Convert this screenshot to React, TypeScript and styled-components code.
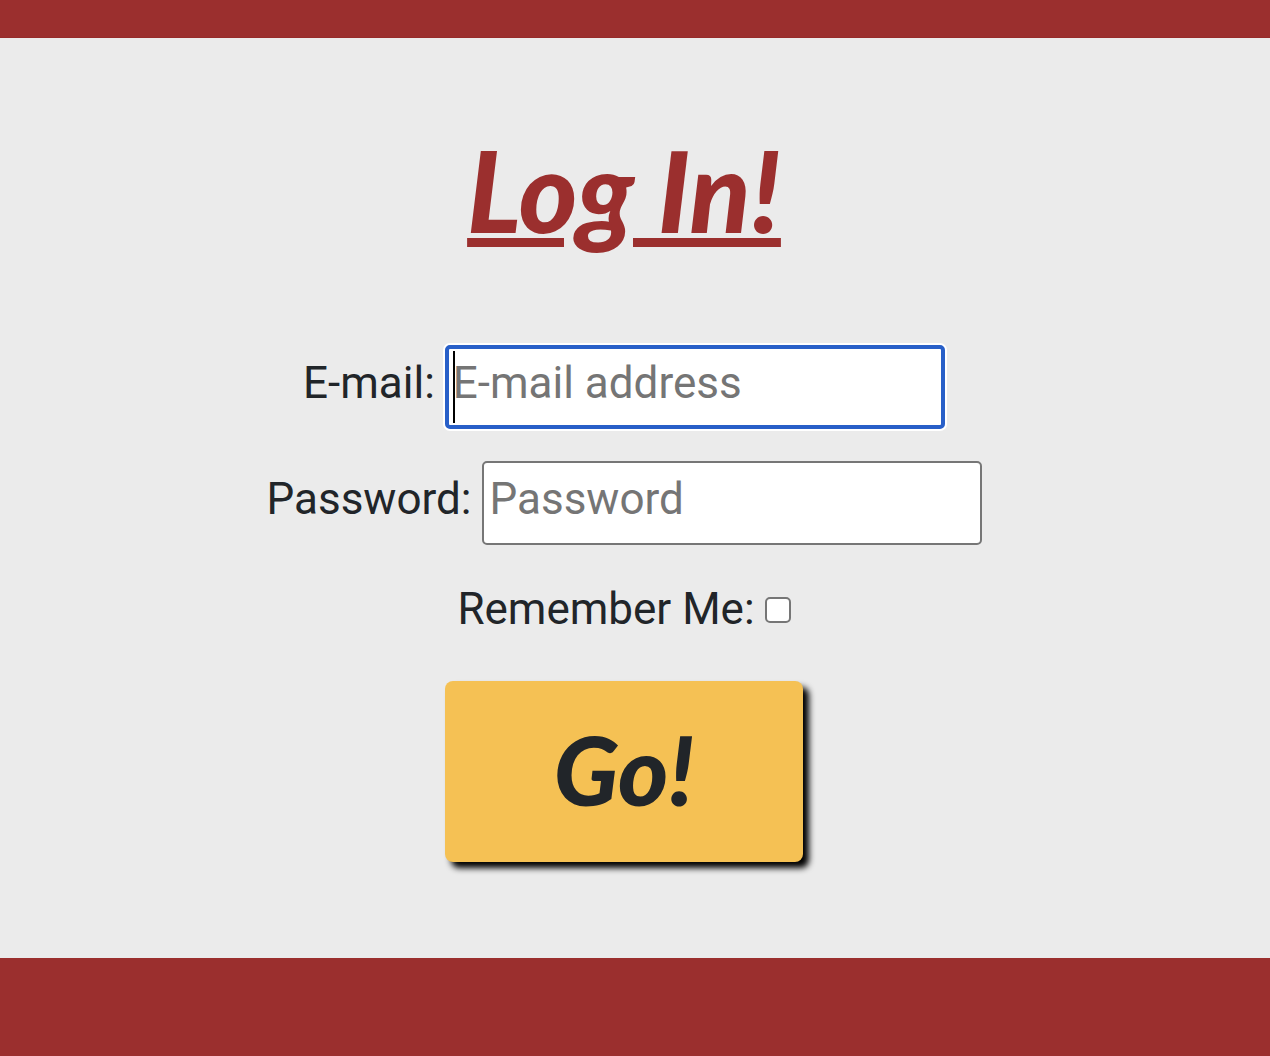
import React from "react";
import styled, { createGlobalStyle } from "styled-components";

const GlobalStyle = createGlobalStyle`
  *, *::before, *::after { box-sizing: border-box; }
  body {
    margin: 0;
    background: #9b2f2e;
    color: #212529;
    font-family: Roboto, "Liberation Sans", sans-serif;
    font-size: 44px;
    line-height: 64px;
  }
`;

const TopBar = styled.header`
  height: 38px;
  background: #9b2f2e;
  border-bottom: 1px solid #962b2a;
`;

const Main = styled.main`
  display: flex;
  flex-direction: column;
  align-items: center;
  padding: 80px 22px 96px 0;
  background: #ebebeb;
`;

const Title = styled.h1`
  margin: 0 0 83px;
  color: #9b2f2e;
  font-family: Lato, sans-serif;
  font-size: 112px;
  font-style: italic;
  font-weight: 900;
  line-height: 144px;
  text-decoration: underline;
  text-decoration-thickness: 9px;
  text-underline-offset: 5px;
`;

const LoginForm = styled.form`
  display: flex;
  flex-direction: column;
  align-items: center;
  gap: 32px;
`;

const Row = styled.div`
  display: flex;
  align-items: center;
  gap: 10px;
`;

const Label = styled.label`
  padding-bottom: 8px;
`;

const Field = styled.input`
  width: 500px;
  height: 84px;
  padding: 0 6px 8px;
  border: 2px solid #767676;
  border-radius: 5px;
  outline: none;
  background: #fff;
  color: #212529;
  caret-color: #000;
  font: inherit;

  &::placeholder {
    color: #757575;
    opacity: 1;
  }

  &:focus {
    padding: 0 4px 8px;
    border: 4px solid #285fc8;
    box-shadow: 0 0 0 2px #fff;
  }

  /* A thick, full-height caret while the focused field is empty. */
  &:focus:placeholder-shown {
    caret-color: transparent;
    background: linear-gradient(#000, #000) 4px 2px / 2px 72px no-repeat #fff;
  }
`;

const CheckBox = styled.input`
  appearance: none;
  width: 26px;
  height: 26px;
  margin: 0 0 6px;
  border: 2px solid #767676;
  border-radius: 5px;
  background: #fff;

  &:checked {
    background: #285fc8;
  }
`;

const GoButton = styled.button`
  width: 358px;
  height: 181px;
  padding: 0 0 6px;
  border: 0;
  border-radius: 8px;
  background: #f5c154;
  box-shadow: 6px 6px 6px #000;
  color: #212529;
  cursor: pointer;
  font-family: Lato, sans-serif;
  font-size: 96px;
  font-style: italic;
  font-weight: 900;
  line-height: 120px;
`;

export default function App() {
  return (
    <>
      <GlobalStyle />
      <TopBar />
      <Main>
        <Title>Log In!</Title>
        <LoginForm onSubmit={(event: React.FormEvent) => event.preventDefault()}>
          <Row>
            <Label htmlFor="email">E-mail:</Label>
            <Field id="email" type="email" placeholder="E-mail address" autoFocus />
          </Row>
          <Row>
            <Label htmlFor="password">Password:</Label>
            <Field id="password" type="password" placeholder="Password" />
          </Row>
          <Row>
            <Label htmlFor="remember">Remember Me:</Label>
            <CheckBox id="remember" type="checkbox" />
          </Row>
          <GoButton type="submit">Go!</GoButton>
        </LoginForm>
      </Main>
    </>
  );
}
